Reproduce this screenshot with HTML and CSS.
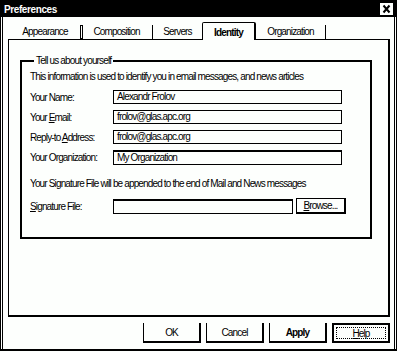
FILE: index.html
```html
<!doctype html>
<html lang="en">
<head>
	<meta charset="UTF-8">
	<title>Preferences</title>
	<link rel="stylesheet" href="styles.css">
</head>
<body>
	<div class="window">
		<div class="titlebar">
			<span class="title">Preferences</span>
			<span class="close">
				<svg width="13" height="12" viewBox="0 0 13 12">
					<path d="M3.5 2.5 L9.5 9.5 M9.5 2.5 L3.5 9.5" stroke="#000" stroke-width="2" fill="none"/>
				</svg>
			</span>
		</div>
		<ul class="tabs">
			<li class="tab first">Appearance</li>
			<li class="tab t-comp">Composition</li>
			<li class="tab t-serv">Servers</li>
			<li class="tab active">Identity</li>
			<li class="tab t-org">Organization</li>
		</ul>
		<div class="panel">
			<fieldset class="group">
				<legend>Tell us about yourself</legend>
				<p class="intro">This information is used to identify you in email messages, and news articles</p>
				<div class="fields">
					<label>Your Name:</label>
					<div class="input">Alexandr Frolov</div>
					<label>Your <u>E</u>mail:</label>
					<div class="input">frolov@glas.apc.org</div>
					<label>Reply-to <u>A</u>ddress:</label>
					<div class="input">frolov@glas.apc.org</div>
					<label>Your Organization:</label>
					<div class="input focus">My Organization</div>
				</div>
				<p class="note">Your Signature File will be appended to the end of Mail and News messages</p>
				<div class="sig-row">
					<label><u>S</u>ignature File:</label>
					<div class="input focus sig"></div>
					<button class="btn browse"><u>B</u>rowse...</button>
				</div>
			</fieldset>
		</div>
		<div class="buttons">
			<button class="btn">OK</button>
			<button class="btn">Cancel</button>
			<button class="btn apply">Apply</button>
			<button class="btn default"><span class="focus-ring"><u>H</u>elp</span></button>
		</div>
	</div>
</body>
</html>
```

FILE: styles.css
```css
body{
	margin:0;
	background:#fdfffd;
	color:#000;
	font-family:"Liberation Sans",Arial,sans-serif;
	font-size:10px;
	letter-spacing:-0.85px;
}
u{
	text-decoration:underline;
}
.window{
	width:397px;
	height:351px;
	box-sizing:border-box;
	border:1px solid #000;
	border-bottom-width:2px;
	box-shadow:inset 1px 0 0 #fdfffd, inset 2px 0 0 #000, inset -1px 0 0 #fdfffd, inset -2px 0 0 #000;
	display:flex;
	flex-direction:column;
}
.titlebar{
	height:16px;
	background:#000;
	color:#fff;
	display:flex;
	align-items:center;
	justify-content:space-between;
	padding:0 3px 0 3px;
}
.title{
	font-weight:bold;
	font-size:10px;
	letter-spacing:-0.4px;
}
.close{
	width:13px;
	height:12px;
	background:#fdfffd;
	display:flex;
}
.tabs{
	display:flex;
	align-items:flex-end;
	height:22px;
	margin:0;
	padding:0 0 0 9px;
	list-style:none;
}
.tab{
	height:14px;
	line-height:14px;
	text-align:center;
	border-right:1px solid #000;
	box-sizing:border-box;
	white-space:nowrap;
}
.first{
	width:71px;
	box-shadow:2px 0 0 -1px #fdfffd, 2px 0 0 0 #000;
}
.t-comp{ width:72px; }
.t-serv{ width:50px; }
.t-org{ width:70px; }
.active{
	width:54px;
	height:18px;
	margin-bottom:-1px;
	padding-top:3px;
	border:1px solid #000;
	border-right-width:2px;
	border-bottom:none;
	border-radius:2px 2px 0 0;
	background:#fdfffd;
	font-weight:bold;
	position:relative;
	z-index:1;
	margin-left:-1px;
}
.panel{
	margin-left:7px;
	width:382px;
	height:278px;
	box-sizing:border-box;
	border:1px solid #000;
	border-right-width:2px;
	border-bottom-width:2px;
}
.group{
	margin:15px 0 0 11px;
	width:352px;
	box-sizing:border-box;
	border:2px solid #000;
	padding:0 0 23px 8px;
	min-width:0;
}
.group legend{
	padding:0 2px;
	margin-left:4px;
	line-height:12px;
}
.intro,.note{
	margin:0;
	line-height:12px;
	white-space:nowrap;
}
.intro{ margin-top:4px; }
.fields{
	display:grid;
	grid-template-columns:83px 229px;
	grid-auto-rows:14px;
	row-gap:6px;
	align-items:center;
	margin-top:7px;
}
label{
	white-space:nowrap;
}
.input{
	height:14px;
	box-sizing:border-box;
	border:1px solid #000;
	padding:0 3px;
	line-height:12px;
	white-space:nowrap;
	overflow:hidden;
}
.input.focus{
	border-top-width:2px;
	line-height:11px;
	height:15px;
}
.note{ margin-top:14px; }
.sig-row{
	display:flex;
	align-items:flex-end;
	margin-top:8px;
}
.sig-row label{
	width:83px;
	align-self:center;
}
.input.sig{
	width:180px;
}
.btn{
	font:inherit;
	letter-spacing:inherit;
	color:#000;
	background:#fdfffd;
	border:none;
	border-left:1px solid #000;
	border-right:2px solid #000;
	border-bottom:2px solid #000;
	padding:0;
	box-sizing:border-box;
}
.browse{
	margin-left:3px;
	width:50px;
	height:16px;
	border-top:1px solid #000;
}
.buttons{
	display:flex;
	justify-content:flex-end;
	gap:5px;
	margin:6px 6px 0 0;
}
.buttons .btn{
	width:58px;
	height:20px;
}
.apply{
	font-weight:bold;
}
.buttons .default{
	border:2px solid #000;
	padding:2px;
}
.focus-ring{
	display:block;
	height:100%;
	box-sizing:border-box;
	border:1px dotted #000;
	line-height:12px;
}
```
